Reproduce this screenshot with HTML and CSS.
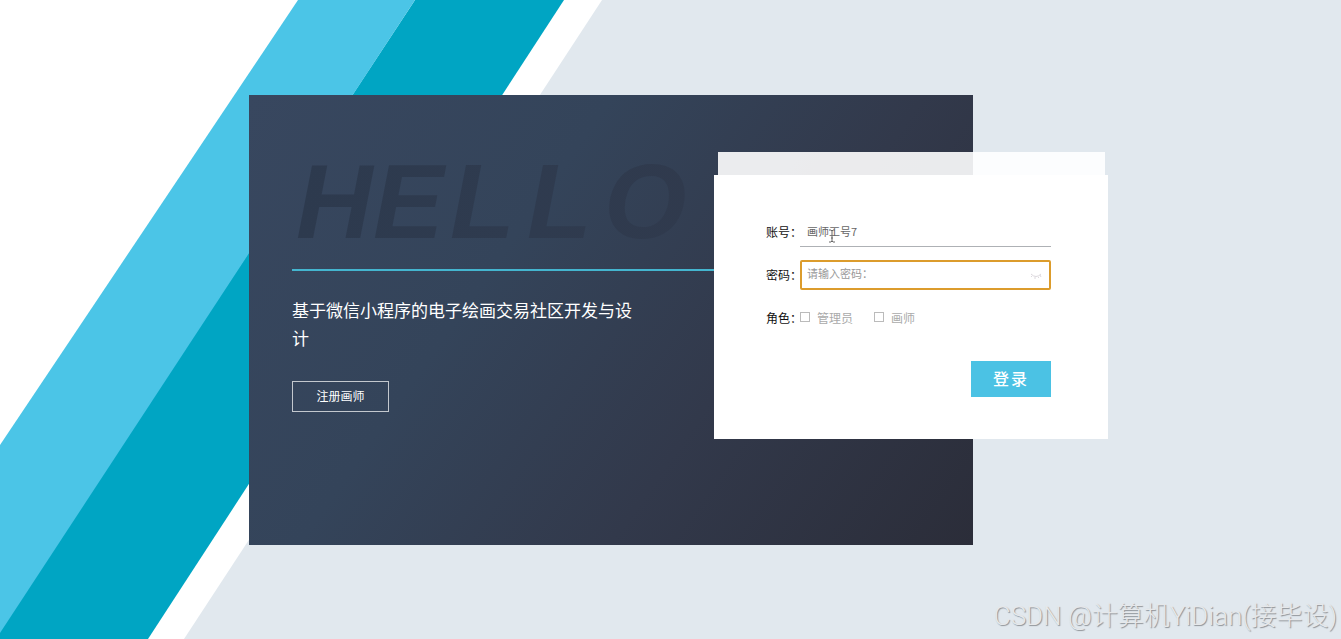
FILE: index.html
```
<!DOCTYPE html>
<html lang="zh-CN">
<head>
    <meta charset="UTF-8">
    <title>登录</title>
    <link rel="stylesheet" href="styles.css">
</head>
<body>
    <!-- 斜条背景 -->
    <svg class="m-bg" viewBox="0 0 1341 639" preserveAspectRatio="none" aria-hidden="true">
        <polygon fill="#fff" points="0,0 602,0 184,639 0,639"/>
        <polygon fill="#00a5c3" points="415,0 564,0 148,639 0,639 0,630"/>
        <polygon fill="#4bc5e7" points="298,0 415,0 0,633 0,445"/>
    </svg>

    <main class="m-login">
        <section class="m-panel">
            <h1 class="hello"><span>H</span><span>E</span><span>L</span><span>L</span><span>O</span></h1>
            <div class="intro">
                <p class="title">基于微信小程序的电子绘画交易社区开发与设计</p>
                <button type="button" class="u-reg">注册画师</button>
            </div>
        </section>

        <div class="m-card">
            <div class="back"></div>
            <form class="form">
                <div class="row">
                    <label for="account">账号：</label>
                    <div class="field">
                        <input type="text" id="account" class="u-ipt" value="画师工号7">
                        <svg class="cursor" viewBox="0 0 8 14" aria-hidden="true">
                            <path d="M1 1h2l1 1 1-1h2M4 2v10M1 13h2l1-1 1 1h2M3 9h2"/>
                        </svg>
                    </div>
                </div>
                <div class="row">
                    <label for="password">密码：</label>
                    <div class="field">
                        <input type="password" id="password" class="u-ipt z-focus" placeholder="请输入密码：" autofocus>
                        <svg class="eye" viewBox="0 0 12 8" aria-hidden="true">
                            <path d="M1 2q5 5 10 0M2 4L1 5M5 5v2M8 5l1 1M10 3l1 2"/>
                        </svg>
                    </div>
                </div>
                <div class="row">
                    <span class="name">角色：</span>
                    <div class="roles">
                        <label class="role"><input type="checkbox" name="role">管理员</label>
                        <label class="role"><input type="checkbox" name="role">画师</label>
                    </div>
                </div>
                <button type="submit" class="u-login">登录</button>
            </form>
        </div>
    </main>

    <div class="m-mark">CSDN @计算机YiDian(接毕设)</div>
</body>
</html>
```
FILE: styles.css
```
html,body{
    height: 100%;
    margin: 0;
    padding: 0;
}
*{
    box-sizing: border-box;
}
body{
    position: relative;
    overflow: hidden;
    background: #e1e8ee;
    font-family: "Noto Sans CJK SC", sans-serif;
    font-size: 12px;
}
button,input{
    font-family: inherit;
}
.m-bg{
    position: absolute;
    top: 0;
    left: 0;
    width: 100%;
    height: 100%;
}

/* login */
.m-login{
    position: relative;
    display: grid;
    grid-template-columns: 465fr 259fr 135fr;
    width: 859px;
    max-width: 100%;
    margin: 0 auto;
    padding-top: 95px;
    left: 8px;
}
.m-panel{
    grid-column: 1 / 3;
    grid-row: 1;
    min-height: 450px;
    padding: 62px 0 40px 43px;
    background: linear-gradient(125deg, #38475f 0%, #34445a 35%, #32394b 65%, #2b2d39 100%);
}
.m-panel .hello{
    display: grid;
    grid-template-columns: repeat(5, 77px);
    margin: 0;
    padding-left: 4px;
    font: italic bold 106px/88px "Liberation Sans", sans-serif;
    background: linear-gradient(90deg, #2d3a4e 0%, #2f3b4f 35%, #303a4d 60%, #31394b 100%);
    -webkit-background-clip: text;
    background-clip: text;
    color: transparent;
}
.m-panel .intro{
    margin-top: 24px;
    padding-top: 25px;
    border-top: 2px solid #44b5cf;
}
.m-panel .title{
    width: 350px;
    margin: 0;
    color: #fff;
    font-size: 17px;
    line-height: 28px;
}
.u-reg{
    display: block;
    width: 97px;
    height: 31px;
    margin-top: 29px;
    padding: 0 0 2px;
    border: 1px solid #c3c8ce;
    background: none;
    color: #fff;
    font-size: 12px;
}

/* card */
.m-card{
    grid-column: 2 / 4;
    grid-row: 1;
    align-self: start;
    margin-top: 57px;
}
.m-card .back{
    height: 23px;
    margin: 0 3px 0 4px;
    background: rgba(255,255,255,.9);
}
.m-card .form{
    display: flex;
    flex-direction: column;
    gap: 13px;
    padding: 42px 57px 42px 52px;
    background: #fff;
}
.m-card .row{
    display: flex;
    align-items: center;
    height: 30px;
    color: #111;
}
.row > label, .row .name, .row .roles{
    padding-bottom: 2px;
}
.row > label, .row .name{
    width: 34px;
    flex: none;
    white-space: nowrap;
}
.row .field{
    position: relative;
    flex: 1;
}
.u-ipt{
    display: block;
    width: 100%;
    height: 30px;
    padding: 0 7px 2px;
    border: 0;
    border-bottom: 1px solid #aeb1b5;
    outline: none;
    background: none;
    color: #666;
    font-size: 11px;
}
.u-ipt::placeholder{
    color: #999;
}
.u-ipt.z-focus{
    padding: 0 5px 4px;
    border: 2px solid #dc9c2c;
    border-radius: 2px;
    caret-color: #777;
}
.field .cursor{
    position: absolute;
    left: 28px;
    top: 12px;
    width: 8px;
    height: 14px;
    fill: none;
    stroke: #666;
}
.field .eye{
    position: absolute;
    right: 9px;
    top: 12px;
    width: 12px;
    height: 8px;
    fill: none;
    stroke: #dcd8dd;
}
.roles{
    display: flex;
    gap: 21px;
}
.roles .role{
    display: flex;
    align-items: center;
    gap: 7px;
    color: #aaa;
}
.role input{
    appearance: none;
    width: 10px;
    height: 10px;
    margin: 0;
    border: 1px solid #bbb;
    background: #fff;
}
.u-login{
    align-self: flex-end;
    width: 80px;
    height: 36px;
    margin-top: 15px;
    padding: 0 0 2px;
    border: 0;
    background: #4bc2e4;
    color: #fff;
    font-size: 16px;
    font-weight: 500;
    letter-spacing: 2px;
}

/* watermark */
.m-mark{
    position: absolute;
    right: 4px;
    bottom: 5px;
    color: #e6e8ea;
    font: 300 26px/36px Roboto, "Noto Sans CJK SC", sans-serif;
    text-shadow: 1px 1px 1px #8d9196;
    white-space: nowrap;
}
```
